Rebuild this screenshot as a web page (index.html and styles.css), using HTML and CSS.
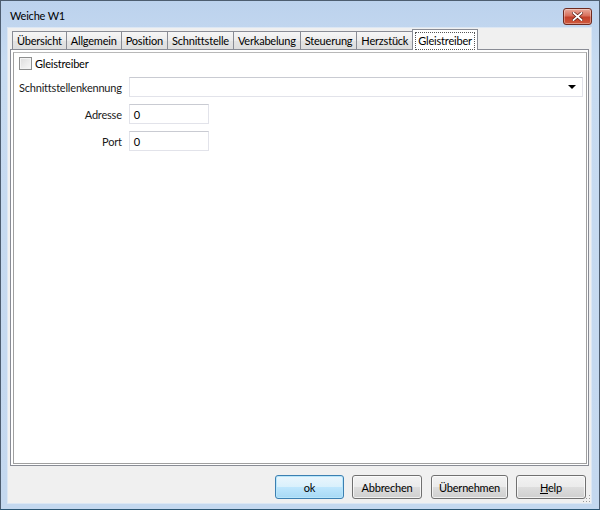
FILE: index.html
```html
<!DOCTYPE html>
<html lang="de">
<head>
    <meta charset="UTF-8">
    <title>Weiche W1</title>
    <link rel="stylesheet" href="styles.css">
</head>
<body>
    <div class="window">
        <div class="titlebar">
            <span class="title">Weiche W1</span>
            <button class="close-btn" title="Schließen">
                <svg width="11" height="9" viewBox="0 0 11 9">
                    <path d="M1.5 1 L9.5 8 M9.5 1 L1.5 8" stroke="#5a1a10" stroke-width="3.2" stroke-linecap="square"/>
                    <path d="M1.5 1 L9.5 8 M9.5 1 L1.5 8" stroke="#ffffff" stroke-width="1.8" stroke-linecap="square"/>
                </svg>
            </button>
        </div>

        <div class="client">
            <div class="tab-widget">
                <div class="tab-bar">
                    <div class="tab">Übersicht</div>
                    <div class="tab">Allgemein</div>
                    <div class="tab">Position</div>
                    <div class="tab">Schnittstelle</div>
                    <div class="tab">Verkabelung</div>
                    <div class="tab">Steuerung</div>
                    <div class="tab">Herzstück</div>
                    <div class="tab active"><span class="focus">Gleistreiber</span></div>
                </div>
                <div class="tab-panel">
                    <div class="page">
                        <label class="check-row">
                            <span class="checkbox"></span>
                            Gleistreiber
                        </label>
                        <div class="form">
                            <span class="form-label">Schnittstellenkennung</span>
                            <div class="combo"><span class="combo-arrow"></span></div>

                            <span class="form-label">Adresse</span>
                            <div class="field">0</div>

                            <span class="form-label">Port</span>
                            <div class="field">0</div>
                        </div>
                    </div>
                </div>
            </div>

            <div class="button-row">
                <button class="btn btn-default btn-ok">ok</button>
                <button class="btn btn-cancel">Abbrechen</button>
                <button class="btn btn-apply">Übernehmen</button>
                <button class="btn btn-help"><u>H</u>elp</button>
            </div>

            <svg class="size-grip" width="9" height="9" viewBox="0 0 9 9">
                <rect x="7" y="1" width="1" height="1" fill="#9a9a9a"/>
                <rect x="4" y="4" width="1" height="1" fill="#9a9a9a"/>
                <rect x="7" y="4" width="1" height="1" fill="#9a9a9a"/>
                <rect x="1" y="7" width="1" height="1" fill="#9a9a9a"/>
                <rect x="4" y="7" width="1" height="1" fill="#9a9a9a"/>
                <rect x="7" y="7" width="1" height="1" fill="#9a9a9a"/>
            </svg>
        </div>
    </div>
</body>
</html>
```

FILE: styles.css
```css
:root {
    --frame-dark: #4d5d70;
    --face: #f0f0f0;
    --tab-border: #898c95;
    --text: #000000;
}

* {
    margin: 0;
    padding: 0;
    box-sizing: border-box;
    font-family: 'Lato', 'Open Sans', sans-serif;
    font-size: 11px;
    letter-spacing: -0.2px;
}

body {
    background: #ffffff;
}

.window {
    width: 600px;
    height: 510px;
    display: flex;
    flex-direction: column;
    border: 1px solid var(--frame-dark);
    border-bottom-color: #2b5674;
    background: linear-gradient(to bottom, #bcd2ed 0%, #c7dbf1 60px, #c4d8ef 100%);
    padding: 0 8px 6px 7px;
}

.titlebar {
    height: 27px;
    flex-shrink: 0;
    display: flex;
    align-items: center;
    justify-content: space-between;
    padding-left: 2px;
    margin-right: -1px;
}

.title {
    color: #000000;
    font-size: 11px;
    margin-top: 1px;
}

.close-btn {
    align-self: flex-start;
    margin-top: 7px;
    width: 29px;
    height: 17px;
    display: grid;
    place-items: center;
    border: 1px solid #6e2a20;
    border-radius: 3px;
    background: linear-gradient(to bottom, #e9a99b 0%, #d9705c 45%, #c4412b 55%, #cf5a3e 100%);
    box-shadow: inset 0 0 0 1px rgba(255, 255, 255, 0.35);
}

.client {
    flex: 1;
    position: relative;
    display: flex;
    flex-direction: column;
    background: var(--face);
    box-shadow: 0 0 0 1px #dce7f4;
    padding: 1px 2px 0 2px;
}

/* tabs */

.tab-widget {
    flex: 1;
    display: flex;
    flex-direction: column;
}

.tab-bar {
    display: flex;
    align-items: flex-end;
    height: 20px;
    padding-left: 2px;
    position: relative;
    z-index: 1;
}

.tab {
    height: 18px;
    padding: 0 4px;
    display: flex;
    align-items: center;
    color: var(--text);
    border: 1px solid var(--tab-border);
    border-bottom: none;
    margin-right: -1px;
    background: linear-gradient(to bottom, #f6f6f6 0%, #ececec 50%, #e4e4e4 51%, #dedede 100%);
}

.tab.active {
    height: 21px;
    margin-bottom: -1px;
    padding: 0 2px;
    background: #ffffff;
    position: relative;
    z-index: 2;
}

.tab .focus {
    border: 1px dotted #555555;
    padding: 1px 2px;
    line-height: 14px;
    margin-top: 1px;
}

.tab-panel {
    flex: 1;
    border: 1px solid var(--tab-border);
    background: #ffffff;
    padding: 2px 1px 1px 2px;
    display: flex;
}

.page {
    flex: 1;
    border: 1px solid #a0a0a0;
    border-top-color: #b8b8b8;
    padding: 4px 3px 0 5px;
}

.check-row {
    display: flex;
    align-items: center;
    gap: 3px;
    height: 13px;
    color: var(--text);
}

.checkbox {
    width: 13px;
    height: 13px;
    border: 1px solid #8e8f8f;
    background: linear-gradient(135deg, #dcdcdc 0%, #eeeeee 60%, #f8f8f8 100%);
    box-shadow: inset 0 0 0 1px #f4f4f4;
}

.form {
    margin-top: 7px;
    display: grid;
    grid-template-columns: max-content 1fr;
    column-gap: 7px;
    row-gap: 7px;
    align-items: center;
}

.form-label {
    justify-self: end;
    color: #1a1a1a;
}

.combo,
.field {
    height: 20px;
    border: 1px solid #e2e3ea;
    border-top-color: #c9cbd2;
    background: #ffffff;
    display: flex;
    align-items: center;
    padding-left: 4px;
    color: var(--text);
}

.combo {
    justify-content: flex-end;
    padding-right: 6px;
}

.combo-arrow {
    width: 0;
    height: 0;
    border-left: 4px solid transparent;
    border-right: 4px solid transparent;
    border-top: 4px solid #000000;
}

.field {
    width: 80px;
}

/* dialog buttons */

.button-row {
    display: flex;
    justify-content: flex-end;
    gap: 8px;
    padding: 9px 3px 4px 0;
}

.btn {
    height: 24px;
    border: 1px solid #707070;
    border-radius: 3px;
    background: linear-gradient(to bottom, #f2f2f2 0%, #ebebeb 50%, #dddddd 51%, #cfcfcf 100%);
    box-shadow: inset 0 0 0 1px rgba(255, 255, 255, 0.7);
    color: var(--text);
    cursor: pointer;
}

.btn u {
    font-size: inherit;
}

.btn-default {
    border-color: #3c7fb1;
    background: linear-gradient(to bottom, #eaf6fd 0%, #d9f0fc 50%, #bee6fd 51%, #a7d9f5 100%);
    box-shadow: inset 0 0 0 1px #b8e6fb;
}

.btn-ok { width: 69px; }
.btn-cancel { width: 70px; }
.btn-apply { width: 77px; margin-left: 1px; }
.btn-help { width: 70px; }

.size-grip {
    position: absolute;
    right: 0;
    bottom: 0;
}
```
